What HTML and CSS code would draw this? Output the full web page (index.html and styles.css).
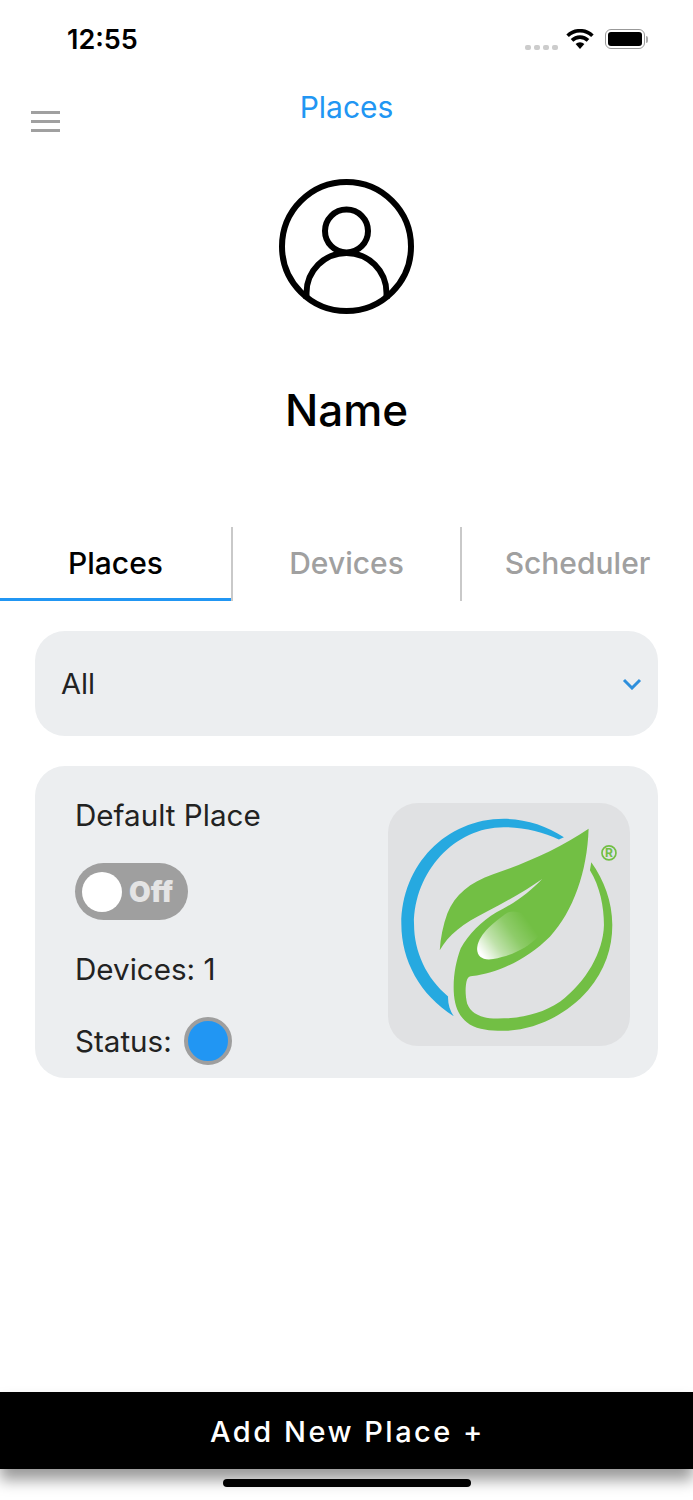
FILE: index.html
```html
<!DOCTYPE html>
<html lang="en">
<head>
    <meta charset="UTF-8">
    <meta name="viewport" content="width=device-width, initial-scale=1.0">
    <title>Places</title>
    <link rel="stylesheet" href="styles.css">
</head>
<body>
<div class="screen">
    <div class="status-bar">
        <span class="time">12:55</span>
        <div class="status-icons">
            <div class="signal"><i></i><i></i><i></i><i></i></div>
            <svg class="wifi" width="28" height="20" viewBox="0 0 28 20">
                <path d="M14 20 L9.6 15 A6.4 6.4 0 0 1 18.4 15 Z" fill="#000"/>
                <path d="M6 11.4 A11.4 11.4 0 0 1 22 11.4" fill="none" stroke="#000" stroke-width="3.6"/>
                <path d="M1.6 6.8 A17.6 17.6 0 0 1 26.4 6.8" fill="none" stroke="#000" stroke-width="3.6"/>
            </svg>
            <div class="battery"><div class="battery-fill"></div></div>
            <div class="battery-cap"></div>
        </div>
    </div>

    <div class="top-nav">
        <div class="menu-icon"><i></i><i></i><i></i></div>
        <div class="nav-title">Places</div>
    </div>

    <div class="profile">
        <svg class="avatar" width="136" height="136" viewBox="0 0 136 136">
            <circle cx="67.5" cy="67.5" r="64.5" fill="none" stroke="#000" stroke-width="6"/>
            <circle cx="67.5" cy="52" r="21.5" fill="none" stroke="#000" stroke-width="6"/>
            <path d="M27.5 120 V114 A40 40 0 0 1 107.5 114 V120" fill="none" stroke="#000" stroke-width="6"/>
        </svg>
        <div class="name">Name</div>
    </div>

    <div class="tabs">
        <div class="tab active">Places</div>
        <div class="tab">Devices</div>
        <div class="tab">Scheduler</div>
    </div>

    <div class="content">
        <div class="select-box">
            <span>All</span>
            <svg width="20" height="12" viewBox="0 0 20 12">
                <path d="M2 2 L10 10 L18 2" fill="none" stroke="#2e8fdc" stroke-width="3"/>
            </svg>
        </div>

        <div class="place-card">
            <div class="place-info">
                <div class="place-name">Default Place</div>
                <div class="toggle"><div class="knob"></div><span>Off</span></div>
                <div class="place-devices">Devices: 1</div>
                <div class="place-status">Status: <div class="status-dot"></div></div>
            </div>
            <div class="logo-tile">
                <svg width="242" height="243" viewBox="25 25 725 727">
                    <defs>
                        <linearGradient id="shine" gradientUnits="userSpaceOnUse" x1="310" y1="485" x2="450" y2="385">
                            <stop offset="0" stop-color="#fff"/>
                            <stop offset="0.3" stop-color="#fff" stop-opacity="0.55"/>
                            <stop offset="0.65" stop-color="#fff" stop-opacity="0.2"/>
                            <stop offset="1" stop-color="#fff" stop-opacity="0"/>
                        </linearGradient>
                    </defs>
                    <path fill="#26a9e0" d="M552 127 C500 92 435 72 372 72 C200 72 65 210 65 388 C65 495 120 600 222 663 C210 645 204 625 205 604 C140 550 103 470 103 388 C103 230 225 97 372 97 C430 97 490 112 537 134 Z"/>
                    <path fill="#72bf44" d="M626 102 C540 160 440 205 340 238 C270 262 225 300 203 355 C190 390 182 430 180 466 C205 420 250 385 320 350 C380 320 440 285 487 252 C450 290 410 322 350 352 C305 378 265 420 243 460 C228 500 220 545 222 590 C224 630 235 665 270 688 C300 705 340 708 380 707 C470 702 560 660 625 585 C675 525 697 460 697 390 C697 320 672 255 634 202 L630 226 C660 275 672 335 672 390 C670 470 620 560 540 620 C480 660 410 672 340 670 C300 668 272 652 262 625 C256 600 256 570 262 553 C266 546 270 543 278 543 C350 535 440 495 510 425 C580 350 622 230 626 102 Z"/>
                    <path fill="url(#shine)" d="M292 462 C292 425 335 385 385 352 C430 340 470 380 475 425 C440 460 395 482 340 492 C310 497 292 485 292 462 Z"/>
                    <circle cx="687" cy="174" r="21" fill="none" stroke="#72bf44" stroke-width="5"/>
                    <text x="687" y="187" class="reg">R</text>
                </svg>
            </div>
        </div>
    </div>

    <div class="add-bar">Add New Place +</div>
    <div class="home-indicator"></div>
</div>
</body>
</html>
```

FILE: styles.css
```css
* {
    box-sizing: border-box;
}
body {
    margin: 0;
    background-color: #fff;
    font-family: 'Inter', 'Liberation Sans', sans-serif;
    color: #222;
}
.screen {
    position: relative;
    height: 1500px;
    overflow: hidden;
    display: flex;
    flex-direction: column;
}

/* status bar */
.status-bar {
    height: 80px;
    padding: 24px 45px 0 67px;
    display: flex;
    justify-content: space-between;
    align-items: flex-start;
}
.time {
    font-size: 27px;
    font-weight: 600;
    line-height: 32px;
    color: #000;
}
.status-icons {
    display: flex;
    align-items: flex-start;
    padding-top: 5px;
}
.signal {
    display: flex;
    gap: 3px;
    margin: 16px 8px 0 0;
}
.signal i {
    display: block;
    width: 6px;
    height: 5px;
    border-radius: 2px;
    background-color: #ccc;
}
.wifi {
    margin-right: 11px;
}
.battery {
    width: 40px;
    height: 20px;
    border: 1.5px solid #999;
    border-radius: 6px;
    padding: 2px;
}
.battery-fill {
    height: 100%;
    background-color: #000;
    border-radius: 3px;
}
.battery-cap {
    width: 2px;
    height: 7px;
    margin: 7px 0 0 1px;
    background-color: #aaa;
    border-radius: 0 2px 2px 0;
}

/* top nav */
.top-nav {
    position: relative;
    height: 60px;
}
.nav-title {
    text-align: center;
    font-size: 30px;
    line-height: 54px;
    color: #2196f3;
}
.menu-icon {
    position: absolute;
    left: 31px;
    top: 31px;
    width: 29px;
    display: flex;
    flex-direction: column;
    gap: 6px;
}
.menu-icon i {
    display: block;
    height: 3px;
    background-color: #a0a0a0;
}

/* profile */
.profile {
    height: 387px;
    padding-top: 39px;
    text-align: center;
}
.avatar {
    display: block;
    margin: 0 auto;
}
.name {
    margin-top: 65px;
    font-size: 44px;
    font-weight: 500;
    line-height: 60px;
    color: #000;
}

/* tabs */
.tabs {
    display: flex;
    height: 74px;
}
.tab {
    width: 229px;
    padding-bottom: 2px;
    display: flex;
    align-items: center;
    justify-content: center;
    font-size: 30px;
    font-weight: 500;
    color: #a0a0a0;
    border-right: 2px solid #c9c9c9;
}
.tab:last-child {
    flex: 1;
    border-right: none;
}
.tab.active {
    width: 233px;
    color: #000;
    box-shadow: inset 0 -3px 0 #2196f3;
}

/* content */
.content {
    padding: 30px 35px 0;
}
.select-box {
    height: 105px;
    padding: 0 16px 0 26px;
    display: flex;
    align-items: center;
    justify-content: space-between;
    background-color: #eceef0;
    border-radius: 30px;
    font-size: 29px;
}
.place-card {
    position: relative;
    height: 312px;
    margin-top: 30px;
    padding: 36px 28px 0 40px;
    display: flex;
    justify-content: space-between;
    align-items: flex-start;
    background-color: #eceef0;
    border-radius: 30px;
    font-size: 29.6px;
}
.place-name {
    line-height: 26px;
}
.toggle {
    width: 113px;
    height: 57px;
    margin: 35px 0 0;
    padding: 0 7px;
    display: flex;
    align-items: center;
    gap: 7px;
    border-radius: 29px;
    background-color: #9f9f9f;
}
.knob {
    width: 40px;
    height: 40px;
    border-radius: 50%;
    background-color: #fff;
}
.toggle span {
    font-size: 28px;
    font-weight: 900;
    color: #e4e4e4;
}
.place-devices {
    margin-top: 35px;
    line-height: 28px;
}
.place-status {
    margin-top: 34px;
    display: flex;
    align-items: center;
    gap: 12px;
    line-height: 48px;
}
.status-dot {
    width: 48px;
    height: 48px;
    border-radius: 50%;
    border: 4px solid #9e9e9e;
    background-color: #2196f3;
}
.logo-tile {
    width: 242px;
    height: 243px;
    margin-top: 1px;
    border-radius: 30px;
    background-color: #e0e1e3;
    overflow: hidden;
}
.logo-tile svg {
    display: block;
}
.reg {
    font-family: 'Inter', sans-serif;
    font-size: 36px;
    font-weight: 700;
    fill: #72bf44;
    text-anchor: middle;
}

/* bottom bar */
.add-bar {
    position: absolute;
    left: 0;
    right: 0;
    top: 1392px;
    height: 77px;
    padding: 2px 0 0 2px;
    display: flex;
    align-items: center;
    justify-content: center;
    background-color: #000;
    color: #fff;
    font-size: 29px;
    font-weight: 500;
    letter-spacing: 2.5px;
    box-shadow: 0 11px 14px rgba(0, 0, 0, 0.4);
}
.home-indicator {
    position: absolute;
    left: 223px;
    top: 1479px;
    width: 248px;
    height: 8px;
    border-radius: 4px;
    background-color: #000;
}
```
